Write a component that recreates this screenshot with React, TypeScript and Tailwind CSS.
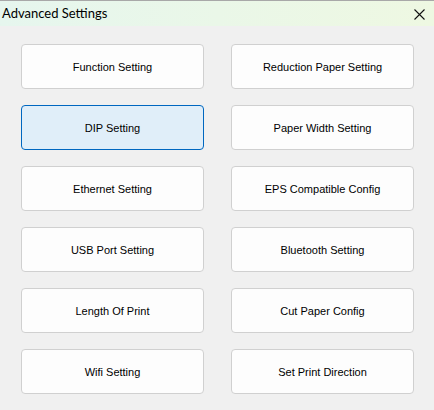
import React from "react";

const items: [string, string][] = [
  ["Function Setting", "Reduction Paper Setting"],
  ["DIP Setting", "Paper Width Setting"],
  ["Ethernet Setting", "EPS Compatible Config"],
  ["USB Port Setting", "Bluetooth Setting"],
  ["Length Of Print", "Cut Paper Config"],
  ["Wifi Setting", "Set Print Direction"],
];

function Btn({ label, active }: { label: string; active?: boolean }) {
  return (
    <button
      className={
        active
          ? "h-[45px] w-[183px] rounded-[4px] border border-[#0067c0] bg-[#e0eef9] pt-[2px] text-[11px] text-black [font-family:'Liberation_Sans',Arial,sans-serif]"
          : "h-[45px] w-[183px] rounded-[4px] border border-[#d0d0d0] bg-[#fdfdfd] pt-[2px] text-[11px] text-black [font-family:'Liberation_Sans',Arial,sans-serif]"
      }
    >
      {label}
    </button>
  );
}

export default function App() {
  return (
    <div className="flex h-[410px] w-[434px] flex-col bg-[#f0f0f0]">
      <div className="flex h-[26px] items-center justify-between border-t border-[#a8a8a8] bg-gradient-to-r from-[#e6f6ee] to-[#eef8e2] pl-[2px] pr-[9px]">
        <span className="text-[13px] text-black [font-family:'Lato',sans-serif] leading-none">
          Advanced Settings
        </span>
        <svg width="11" height="11" viewBox="0 0 11 11" className="mt-[1px]">
          <path d="M0.5 0.5 L10.5 10.5 M10.5 0.5 L0.5 10.5" stroke="#111" strokeWidth="1.1" />
        </svg>
      </div>
      <div className="grid grid-cols-[183px_183px] gap-x-[27px] gap-y-[16px] pl-[21px] pt-[18px]">
        {items.map(([a, b]) => (
          <React.Fragment key={a}>
            <Btn label={a} active={a === "DIP Setting"} />
            <Btn label={b} />
          </React.Fragment>
        ))}
      </div>
    </div>
  );
}
